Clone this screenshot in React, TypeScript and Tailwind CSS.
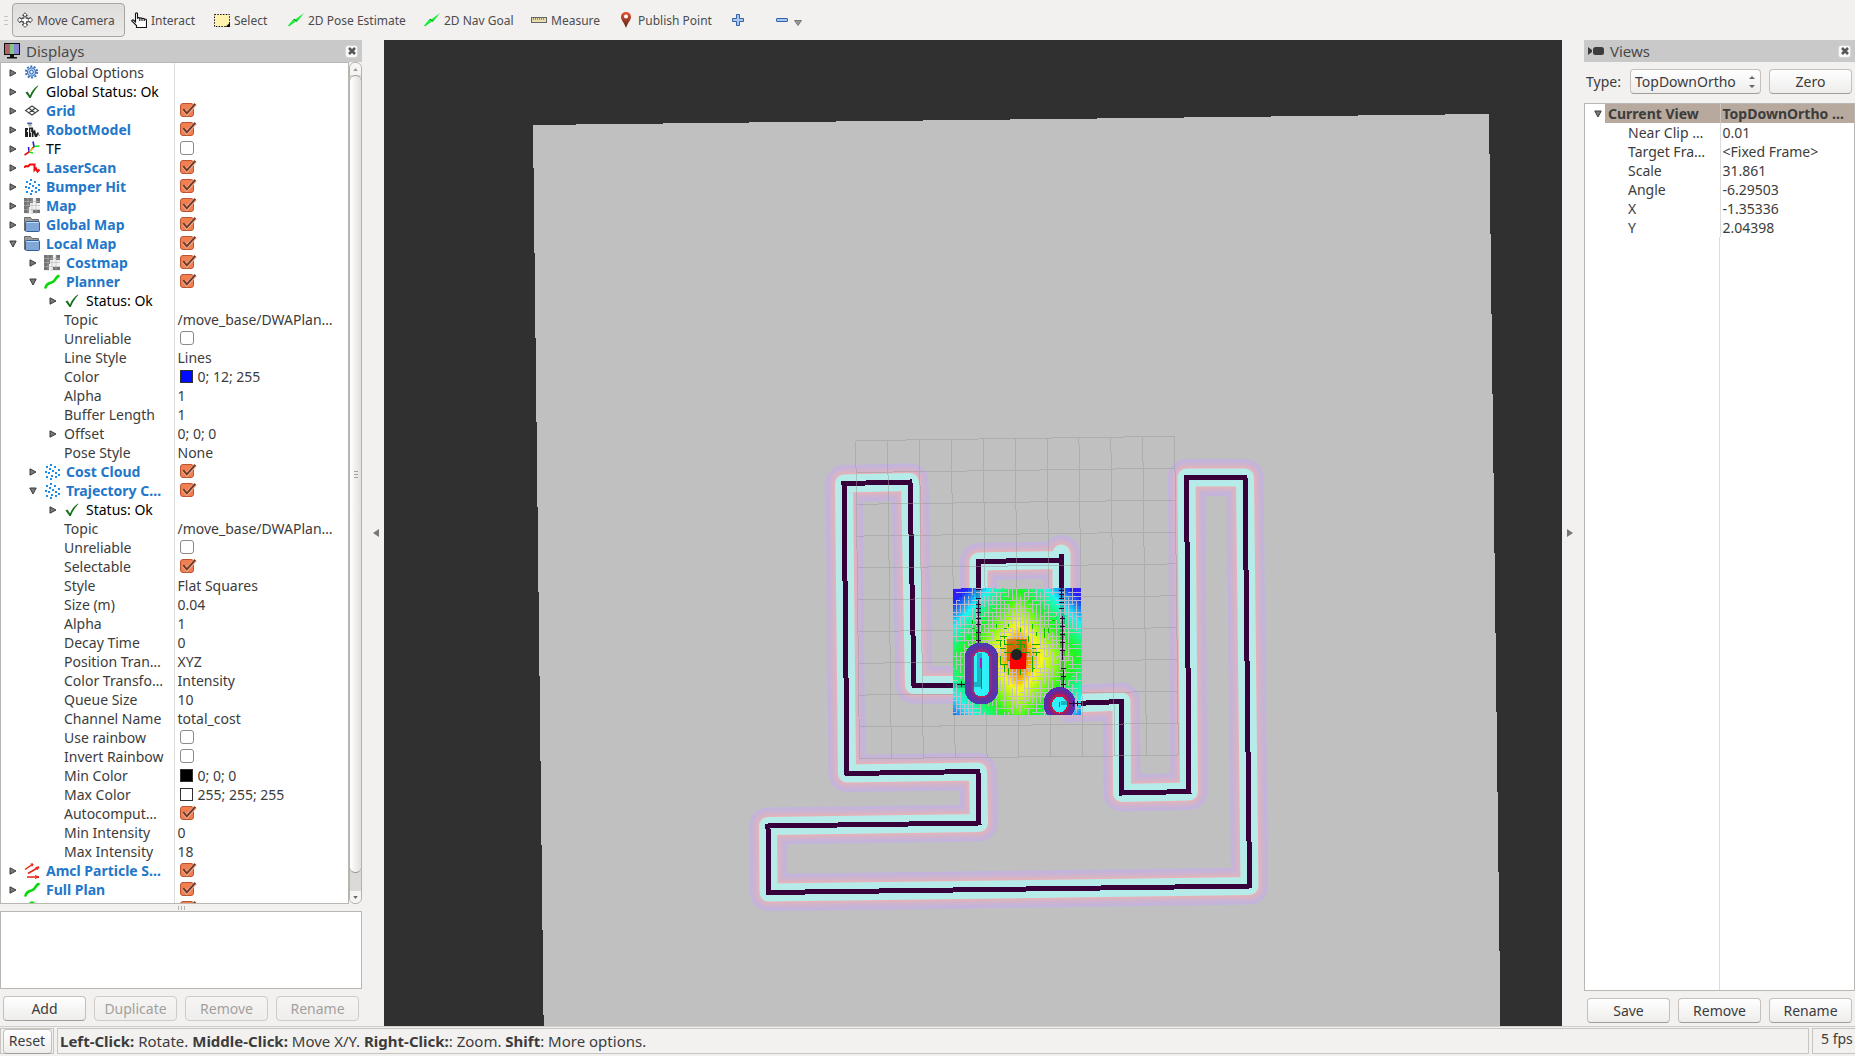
import React from "react";

type IconName =
  | "gear" | "check" | "grid" | "robot" | "tf" | "laser" | "points" | "map"
  | "folder" | "path" | "arrows" | "polygon";

type Row = {
  level: 0 | 1 | 2;
  name: string;
  icon?: IconName;
  arrow?: "open" | "closed";
  tone?: "on" | "black" | "plain";
  checked?: boolean;
  value?: string;
  swatch?: string;
};

const rows: Row[] = [
  { level: 0, name: "Global Options", icon: "gear", arrow: "closed" },
  { level: 0, name: "Global Status: Ok", icon: "check", arrow: "closed", tone: "black" },
  { level: 0, name: "Grid", icon: "grid", arrow: "closed", tone: "on", checked: true },
  { level: 0, name: "RobotModel", icon: "robot", arrow: "closed", tone: "on", checked: true },
  { level: 0, name: "TF", icon: "tf", arrow: "closed", tone: "black", checked: false },
  { level: 0, name: "LaserScan", icon: "laser", arrow: "closed", tone: "on", checked: true },
  { level: 0, name: "Bumper Hit", icon: "points", arrow: "closed", tone: "on", checked: true },
  { level: 0, name: "Map", icon: "map", arrow: "closed", tone: "on", checked: true },
  { level: 0, name: "Global Map", icon: "folder", arrow: "closed", tone: "on", checked: true },
  { level: 0, name: "Local Map", icon: "folder", arrow: "open", tone: "on", checked: true },
  { level: 1, name: "Costmap", icon: "map", arrow: "closed", tone: "on", checked: true },
  { level: 1, name: "Planner", icon: "path", arrow: "open", tone: "on", checked: true },
  { level: 2, name: "Status: Ok", icon: "check", arrow: "closed", tone: "black" },
  { level: 2, name: "Topic", value: "/move_base/DWAPlan…" },
  { level: 2, name: "Unreliable", checked: false },
  { level: 2, name: "Line Style", value: "Lines" },
  { level: 2, name: "Color", value: "0; 12; 255", swatch: "#000cff" },
  { level: 2, name: "Alpha", value: "1" },
  { level: 2, name: "Buffer Length", value: "1" },
  { level: 2, name: "Offset", arrow: "closed", value: "0; 0; 0" },
  { level: 2, name: "Pose Style", value: "None" },
  { level: 1, name: "Cost Cloud", icon: "points", arrow: "closed", tone: "on", checked: true },
  { level: 1, name: "Trajectory C…", icon: "points", arrow: "open", tone: "on", checked: true },
  { level: 2, name: "Status: Ok", icon: "check", arrow: "closed", tone: "black" },
  { level: 2, name: "Topic", value: "/move_base/DWAPlan…" },
  { level: 2, name: "Unreliable", checked: false },
  { level: 2, name: "Selectable", checked: true },
  { level: 2, name: "Style", value: "Flat Squares" },
  { level: 2, name: "Size (m)", value: "0.04" },
  { level: 2, name: "Alpha", value: "1" },
  { level: 2, name: "Decay Time", value: "0" },
  { level: 2, name: "Position Tran…", value: "XYZ" },
  { level: 2, name: "Color Transfo…", value: "Intensity" },
  { level: 2, name: "Queue Size", value: "10" },
  { level: 2, name: "Channel Name", value: "total_cost" },
  { level: 2, name: "Use rainbow", checked: false },
  { level: 2, name: "Invert Rainbow", checked: false },
  { level: 2, name: "Min Color", value: "0; 0; 0", swatch: "#000000" },
  { level: 2, name: "Max Color", value: "255; 255; 255", swatch: "#ffffff" },
  { level: 2, name: "Autocomput…", checked: true },
  { level: 2, name: "Min Intensity", value: "0" },
  { level: 2, name: "Max Intensity", value: "18" },
  { level: 0, name: "Amcl Particle S…", icon: "arrows", arrow: "closed", tone: "on", checked: true },
  { level: 0, name: "Full Plan", icon: "path", arrow: "closed", tone: "on", checked: true },
  { level: 0, name: "Marker", icon: "polygon", arrow: "closed", tone: "on", checked: true },
];

const views: [string, string][] = [
  ["Near Clip …", "0.01"],
  ["Target Fra…", "<Fixed Frame>"],
  ["Scale", "31.861"],
  ["Angle", "-6.29503"],
  ["X", "-1.35336"],
  ["Y", "2.04398"],
];

const dots: [number, number][] = [
  [6, 0], [10, 2], [2, 2], [5, 4], [14, 5], [8, 6], [1, 7], [4, 8],
  [11, 8], [7, 11], [2, 12], [11, 12], [14, 10], [6, 14],
];

function Icon({ name }: { name: IconName }) {
  return (
    <svg viewBox="0 0 16 16" className="block size-4 shrink-0" aria-hidden="true">
      {name === "gear" && (
        <g fill="none" stroke="#3c6eb4">
          <circle cx="7.500" cy="7" r="5.600" stroke="#3f74bb" strokeWidth="2" strokeDasharray="2 1.500" />
          <circle cx="7.500" cy="7" r="4.200" fill="#a9c7ec" />
          <circle cx="7.500" cy="7" r="1.800" fill="#e8f0fa" />
        </g>
      )}
      {name === "check" && (
        <path d="M1.500 8.500 3.500 7.500 6 11.500C7.500 7.500 10 4 14 1.500L14.300 2C11 5.500 8.500 9.500 6.800 14L5.500 14Z" fill="#15701b" />
      )}
      {name === "grid" && (
        <path d="M8 3 14.500 7.500 8 12 1.500 7.500ZM4.800 5.200 11.200 9.800M11.200 5.200 4.800 9.800" fill="none" stroke="#444" strokeWidth="1.100" />
      )}
      {name === "robot" && (
        <g fill="#222">
          <path d="M3.500.5h4l1 1.500H3Z" fill="#3c62a8" />
          <path d="M3.500 2h4v2.500H5Z" fill="#aaa" />
          <path d="M1 6h3v9H1ZM5 5.500h4l.5 3.500 1.500-1.500 1 4.500 2-2 .8 1-1.800 4h-2l-1.500-4v4H7.800v-5H7v5H5Z" />
          <path d="M3 8h1v2H3ZM6.200 7h1v4h-1Z" fill="#ddd" />
          <path d="M14 11l1.500 3" stroke="#777" />
        </g>
      )}
      {name === "tf" && (
        <g fill="none" strokeWidth="1.600">
          <path d="M10 5.500 15.500 5M5 11 9 12" stroke="#0ce612" />
          <path d="M10 5.500 9 .5M5 11 4.500 6" stroke="#2222e8" />
          <path d="M10 5.500 7 9M5 11 .5 14" stroke="#e81010" />
          <path d="M8.500 7 5.500 10.500" stroke="#e8c020" />
        </g>
      )}
      {name === "laser" && (
        <path d="M0 7.500 2 6 4 6.500 6 4.500 10.500 4.500 10.500 10 12 8.500 13.500 11.500 15.500 9.500" fill="none" stroke="#f30808" strokeWidth="2" />
      )}
      {name === "points" && dots.map(([x, y]) => (
        <rect key={`${x}-${y}`} x={x} y={y} width="2" height="2" fill="#1c8eea" />
      ))}
      {name === "map" && (
        <g>
          <rect width="16" height="16" fill="#f2f2f2" />
          <path d="M0 0H9V5H6V9H5V15H0ZM12 0H16V5H12ZM9 12H16V15H9Z" fill="#737373" />
          <path d="M0 3.500H16M0 7.500H16M0 11.500H16M4 0V16M8 0V16M12 0V16" stroke="#b5b5b5" strokeWidth=".6" />
        </g>
      )}
      {name === "folder" && (
        <g strokeWidth="1">
          <path d="M.5 13.500V.5H6.500L8 2.500H14.500V13.500Z" fill="#9b9b97" stroke="#6d6d69" />
          <rect x="1.500" y="4.500" width="14" height="10" rx="1" fill="#7fa7d8" stroke="#32609e" />
          <path d="M2.500 5.500H14.500" stroke="#c7dcf3" />
        </g>
      )}
      {name === "path" && (
        <path d="M1.500 13.500C3 8 7 9.500 9.500 7.500S11.500 3.500 14.500 2" fill="none" stroke="#0bd80b" strokeWidth="2.600" strokeLinecap="round" />
      )}
      {name === "arrows" && (
        <g fill="none" stroke="#e82010" strokeWidth="1.500">
          <path d="M1 6.500 9 1M4 10.500 15 4M3 14H15" />
          <path d="M6.500 1 9 1 8 3.500M11.500 4.500 15 4 13 7M11 12.500 15 14 11 15.500" strokeWidth="1" />
        </g>
      )}
      {name === "polygon" && <path d="M8 0 15 4 13 13H3L1 4Z" fill="#08e808" />}
    </svg>
  );
}

function Arrow({ open }: { open: boolean }) {
  return (
    <svg viewBox="0 0 8 8" className="block size-2 shrink-0" aria-hidden="true">
      <path d={open ? "M.8 1H7.200L4 7Z" : "M1 .8V7.200L7 4Z"} fill="#7a7a7a" stroke="#3c3c3c" />
    </svg>
  );
}

function CheckBox({ id, checked }: { id: string; checked: boolean }) {
  return (
    <span className="mb-px ml-[5px] grid w-[17px]">
      <input
        id={id}
        type="checkbox"
        defaultChecked={checked}
        className="peer col-start-1 row-start-1 size-[14px] appearance-none rounded-[3px] border border-[#8d8b87] bg-white checked:border-[#bb5430] checked:bg-[#f07f52]"
      />
      <svg viewBox="0 0 17 14" className="pointer-events-none invisible col-start-1 row-start-1 h-[14px] w-[17px] peer-checked:visible" aria-hidden="true">
        <path d="M3.500 6.500 6.800 10.500 15.500 1" fill="none" stroke="#f9b394" strokeWidth="3.500" />
        <path d="M3.300 6.200 6.800 10.300 15.300 .8" fill="none" stroke="#6b3a2a" strokeWidth="2" />
      </svg>
    </span>
  );
}

const arrowPad = { 0: "pl-2", 1: "pl-7", 2: "pl-12" };
const toneClass = { on: "font-bold text-[#2277c9]", black: "text-black", plain: "text-[#3c3c3c]" };

function TreeRow({ row, index }: { row: Row; index: number }) {
  const id = `display-${index}`;
  const cls = `whitespace-nowrap ${toneClass[row.tone ?? "plain"]}`;
  return (
    <tr className="h-[19px]">
      <td className="overflow-hidden border-r border-[#dcdcdc] p-0">
        <div className={`flex h-[19px] items-center ${arrowPad[row.level]}`}>
          <span className="w-2 shrink-0">{row.arrow && <Arrow open={row.arrow === "open"} />}</span>
          {row.icon ? (
            <span className="mr-[6px] ml-[7px] shrink-0"><Icon name={row.icon} /></span>
          ) : (
            <span className="w-[7px] shrink-0" />
          )}
          {row.checked === undefined ? <span className={cls}>{row.name}</span> : <label htmlFor={id} className={cls}>{row.name}</label>}
        </div>
      </td>
      <td className="overflow-hidden p-0">
        <div className="flex h-[19px] items-center whitespace-nowrap text-[#3c3c3c]">
          {row.checked !== undefined && <CheckBox id={id} checked={row.checked} />}
          {row.swatch && <span className="mr-[5px] ml-[5px] size-[13px] border border-[#303030]" style={{ backgroundColor: row.swatch }} />}
          {row.value && <span className={row.swatch ? "" : "pl-[3px]"}>{row.value}</span>}
        </div>
      </td>
    </tr>
  );
}

function PushButton({ children, disabled, className = "w-[83px]" }: { children: string; disabled?: boolean; className?: string }) {
  return (
    <button
      type="button"
      disabled={disabled}
      className={`h-[25px] shrink-0 rounded-[4px] border border-[#c4c0bb] border-b-[#a19e99] bg-linear-to-b from-white to-[#eeedec] text-center leading-[22px] text-[#3c3c3c] disabled:border-[#cfccc8] disabled:from-[#f6f5f4] disabled:to-[#efeeed] disabled:text-[#a3a09c] ${className}`}
    >
      {children}
    </button>
  );
}

function PanelTitle({ title, children }: { title: string; children: React.ReactNode }) {
  return (
    <header className="flex h-[22px] shrink-0 items-center gap-[6px] bg-[#c9c9c9] pr-1 pl-1 text-[#4a4a4a]">
      {children}
      <h2 className="flex-1 text-[15px]">{title}</h2>
      <button type="button" aria-label={`Close ${title}`} className="grid size-[13px] place-items-center rounded-[3px] border border-[#d8d6d3] bg-[#f9f9f8]">
        <svg viewBox="0 0 8 8" className="size-2"><path d="M1 1 7 7M7 1 1 7" stroke="#555" strokeWidth="2.600" /></svg>
      </button>
    </header>
  );
}

function ToolIcon({ name }: { name: string }) {
  return (
    <svg viewBox="0 0 16 16" className="block size-4 shrink-0" aria-hidden="true">
      {name === "move" && (
        <g fill="#fff" stroke="#555" strokeWidth="1">
          <path d="M8 .7 10.500 3.500H9V6.500H13V5L15.500 8 13 11V9.500H9.500V12.500H11L8 15.300 5 12.500H6.500V9.500H3V11L.5 8 3 5V6.500H7V3.500H5.500Z" />
          <circle cx="8" cy="8" r="3.500" fill="none" strokeWidth=".8" />
        </g>
      )}
      {name === "hand" && (
        <path d="M4.500 10V1.500Q5.500.3 6.500 1.500V6Q7.500 5 8.700 6.200 10 5.400 11 6.600 12.500 5.800 13.200 7 15 6.800 15.500 8V15.500H5.500V13.500L.7 8.800Q1.500 7.200 3 8.500ZM8.800 6.500V9M11 7V9M13.200 7.500V9" fill="#fff" stroke="#111" strokeWidth="1.100" />
      )}
      {name === "select" && (
        <g>
          <rect x=".5" y="2.500" width="15" height="12" fill="#fdf3ae" stroke="#111" strokeDasharray="1.500 1.300" />
          <path d="M12 14.500 16 10.500V15H12Z" fill="#111" />
        </g>
      )}
      {name === "arrow" && (
        <g>
          <path d="M0 13.500 6 6.500 6.500 8 16 1 9.500 9.500 8.500 9 1 14.500Z" fill="#18ee3a" />
          <path d="M6 7 9 9.500" stroke="#0a7a20" />
        </g>
      )}
      {name === "ruler" && (
        <g>
          <rect x=".5" y="5.500" width="15" height="5" fill="#e9dfae" stroke="#666" />
          <path d="M2.500 6V8M4.500 6V8M6.500 6V8M8.500 6V8M10.500 6V8M12.500 6V8" stroke="#777" strokeWidth=".8" />
        </g>
      )}
      {name === "pin" && (
        <g>
          <defs><linearGradient id="pin" x2="0" y2="1"><stop stopColor="#ea5638" /><stop offset="1" stopColor="#4e2415" /></linearGradient></defs>
          <path d="M8 0C4.500 0 3 2.500 3 5 3 8.500 6 10 8 16 10 10 13 8.500 13 5 13 2.500 11.500 0 8 0Z" fill="url(#pin)" />
          <circle cx="8" cy="4.500" r="2" fill="#fff" />
        </g>
      )}
      {name === "plus" && <path d="M6.500 2.500H9.500V6.500H13.500V9.500H9.500V13.500H6.500V9.500H2.500V6.500H6.500Z" fill="#a8c8ee" stroke="#3163a5" />}
      {name === "minus" && <rect x="2.500" y="6.500" width="11" height="3" rx=".5" fill="#a8c8ee" stroke="#3163a5" />}
    </svg>
  );
}

const tools: [string, string, string][] = [
  ["hand", "Interact", "w-[83px]"],
  ["select", "Select", "w-[74px]"],
  ["arrow", "2D Pose Estimate", "w-[136px]"],
  ["arrow", "2D Nav Goal", "w-[107px]"],
  ["ruler", "Measure", "w-[87px]"],
  ["pin", "Publish Point", "w-[112px]"],
];

/* Laser-mapped walls of the world, in scene pixels. */
const wallPaths = [
  "M970 685H914L910 482 844 483.500 847 773.500 978 771.500 979 823 768 826 768.500 892.500 1249.500 886 1245 477.500H1186.500L1189 791.500 1122 793 1121.500 701.500 1062 704",
  "M978.500 640V561.500L1061.500 560V553.500 700",
];

const inflation: [string, number][] = [
  ["#c2b4dc", 37], ["#c5b4d9", 34], ["#c9b4d4", 31], ["#ceb4ce", 28],
  ["#d5b4c7", 25], ["#ddb4c0", 22], ["#e7b2b8", 20],
];

function random(seed: number) {
  let s = seed;
  return () => {
    s = (s * 1664525 + 1013904223) % 4294967296;
    return s / 4294967296;
  };
}

const BOX = { x: 953, y: 588, w: 128, h: 127 };

function costCells() {
  const cells: { x: number; y: number; fill: string }[] = [];
  for (let y = BOX.y; y < BOX.y + BOX.h; y += 3) {
    for (let x = BOX.x; x < BOX.x + BOX.w; x += 3) {
      const dx = Math.min(1, Math.abs(x + 1 - 1018) / 65);
      const dy = Math.min(1, Math.abs(y + 1 - 657) / 68);
      const hx = 122 * Math.pow(dx, 0.9);
      const hy = 110 * Math.pow(dy, 1.15);
      const corner = (y < 655 ? 66 : 34) * Math.pow(dx * dy, 1.3);
      const hue = 12 + Math.pow(Math.pow(hx, 1.35) + Math.pow(hy, 1.35), 1 / 1.35) + corner;
      cells.push({ x, y, fill: `hsl(${Math.min(245, Math.round(hue))} 92% ${hue < 50 ? 50 : 54}%)` });
    }
  }
  return cells;
}

function scratches(count: number, seed: number, halfW: number, halfH: number, maxLen: number, cx: number, cy: number) {
  const next = random(seed);
  let d = "";
  for (let i = 0; i < count; i++) {
    const x = Math.round((cx + (next() * 2 - 1) * halfW) / 4) * 4;
    const y = Math.round((cy + (next() * 2 - 1) * halfH) / 4) * 4;
    const len = Math.round(3 + next() * maxLen);
    d += next() > 0.5
      ? `M${x} ${y + 0.5}h${Math.max(2, Math.min(len, 1081 - x))}`
      : `M${x + 0.5} ${y}v${Math.max(2, Math.min(len, 715 - y))}`;
  }
  return d;
}

function gridLines() {
  let d = "";
  for (let i = 0; i <= 10; i++) {
    const t = i / 10;
    d += `M${855.7 + 318.9 * t} ${440.7 - 4.4 * t}L${859.5 + 318.9 * t} ${758.7 - 3.4 * t}`;
    d += `M${855.7 + 3.8 * t} ${440.7 + 318 * t}L${1174.6 + 3.8 * t} ${436.3 + 319 * t}`;
  }
  return d;
}

function Scene() {
  return (
    <svg viewBox="384 40 1178 986" preserveAspectRatio="xMidYMid slice" className="block size-full bg-[#303030]" role="img" aria-label="Top-down map view">
      <defs>
        <clipPath id="local"><rect x={BOX.x} y={BOX.y} width={BOX.w} height={BOX.h} /></clipPath>
      </defs>
      <path d="M533 125 1489 114 1500.500 1030H543.700Z" fill="#c0c0c0" shapeRendering="crispEdges" />
      {inflation.map(([color, width]) => (
        <g key={width} fill="none" stroke={color} strokeWidth={width} strokeLinejoin="round">
          {wallPaths.map((d) => <path key={d} d={d} />)}
        </g>
      ))}
      <g fill="none" strokeLinejoin="round">
        {wallPaths.map((d) => <path key={d} d={d} stroke="#b5ecea" strokeWidth="18" />)}
      </g>
      <g fill="none" stroke="#38003a" strokeWidth="5" shapeRendering="crispEdges">
        {wallPaths.map((d) => <path key={d} d={d} />)}
      </g>
      <path d={gridLines()} fill="none" stroke="#999" strokeOpacity=".5" strokeWidth="1" shapeRendering="crispEdges" />
      <g clipPath="url(#local)" shapeRendering="crispEdges">
        {costCells().map((c) => <rect key={`${c.x}-${c.y}`} x={c.x} y={c.y} width="3" height="3" fill={c.fill} />)}
        <path d="M978.500 588V650M1062.500 588V700M954 685H970" stroke="#0c3a4a" strokeOpacity=".28" strokeWidth="5" fill="none" />
        <path d={scratches(800, 7, 64, 64, 15, 1013, 648)} stroke="#c9bccb" strokeOpacity=".9" fill="none" />
        <rect x="1007" y="639" width="20" height="22" fill="#c85a00" fillOpacity=".75" />
        <path d={scratches(46, 31, 21, 18, 7, 1014, 650)} stroke="#12a808" fill="none" />
        <path d={scratches(16, 97, 45, 26, 3, 1016, 645)} stroke="#12b808" fill="none" />
        <path d="M978.500 600V645M1061.500 588V598M1062.500 616V660M1063.500 670V690" stroke="#2e0430" fill="none" />
        <path d="M976 589.500h5M976 598.500h5M976 604.500h5M976 608.500h5M976 612.500h5M976 618.500h5M976 624.500h5M976 632.500h5M976 640.500h5M1059 590.500h5M1059 594.500h5M1059 598.500h5M1059 602.500h5M1059 608.500h5M1060 618.500h5M1060 626.500h5M1060 634.500h5M1060 642.500h5M1060 650.500h5M1061 668.500h5M1061 676.500h5M1061 684.500h5M957 684.500h15M961.500 681v6M966.500 681v6" stroke="#2e0430" fill="none" />
        <rect x="965" y="643" width="33" height="61" rx="14" fill="#5038ae" />
        <rect x="968" y="646" width="27" height="55" rx="12" fill="#66309e" />
        <rect x="971" y="649" width="21" height="49" rx="10" fill="#8e2c80" />
        <rect x="973" y="651" width="17" height="46" rx="8" fill="#c42a58" />
        <rect x="974" y="652" width="15" height="44" rx="6" fill="#2ef2f8" />
        <path d="M977 653H982V687H974V682H977Z" fill="#18b4c4" />
        <path d="M981.500 658V689" stroke="#b414c8" strokeWidth="1" />
        <path d="M980.500 658V668" stroke="#b414c8" strokeWidth="1" />
        <ellipse cx="1059.500" cy="704" rx="16" ry="17" fill="#5a2cae" />
        <ellipse cx="1059.500" cy="704" rx="12.500" ry="13" fill="#7c2286" />
        <ellipse cx="1059.500" cy="704" rx="9.500" ry="10.500" fill="#bc1c50" />
        <ellipse cx="1059.500" cy="704.500" rx="7.500" ry="8" fill="#2ef2f8" />
        <path d="M1061 701h6v4h-6Z" fill="#18b4c4" />
        <path d="M1059.500 702v5" stroke="#b414c8" />
        <path d="M1069 703.500h12M1073.500 701v5M1077.500 701v5" stroke="#2e0430" />
        <rect x="1010" y="653" width="16" height="16" fill="#f00" />
      </g>
      <circle cx="1016.500" cy="654.500" r="5.500" fill="#222" />
    </svg>
  );
}

function Gutter({ side }: { side: "left" | "right" }) {
  return (
    <div className={`flex w-[22px] shrink-0 items-center px-[5px] ${side === "left" ? "justify-end" : "justify-start"}`}>
      <svg viewBox="0 0 6 8" className="h-2 w-[6px]" aria-hidden="true">
        <path d={side === "left" ? "M6 0V8L0 4Z" : "M0 0V8L6 4Z"} fill="#777" />
      </svg>
    </div>
  );
}

export default function App() {
  return (
    <div className="flex h-screen flex-col overflow-hidden bg-[#f2f1f0] font-['Noto_Sans',sans-serif] text-[14px] leading-[19px] text-[#3c3c3c]">
      <nav className="flex h-10 shrink-0 items-center text-[12px] text-[#4c4c4c]" aria-label="Tools">
        <div className="flex w-3 shrink-0 flex-col items-start gap-[3px] pl-1">
          <i className="h-px w-1 bg-[#c9c6c2]" /><i className="h-px w-1 bg-[#c9c6c2]" /><i className="h-px w-1 bg-[#c9c6c2]" />
        </div>
        <button type="button" aria-pressed="true" className="mr-[6px] flex h-[34px] w-[113px] items-center gap-1 rounded-[4px] border border-[#a8a49e] bg-linear-to-b from-[#dedddb] to-[#eceae8] pl-1 whitespace-nowrap">
          <ToolIcon name="move" />Move Camera
        </button>
        {tools.map(([icon, label, width]) => (
          <button key={label} type="button" className={`flex h-[34px] shrink-0 items-center gap-1 whitespace-nowrap ${width}`}>
            <ToolIcon name={icon} />{label}
          </button>
        ))}
        <button type="button" aria-label="Add tool" className="w-11"><ToolIcon name="plus" /></button>
        <button type="button" aria-label="Remove tool" className="flex items-center gap-1">
          <ToolIcon name="minus" />
          <svg viewBox="0 0 8 6" className="mt-[6px] h-[6px] w-2"><path d="M.5.5H7.500L4 5.500Z" fill="#999" stroke="#777" /></svg>
        </button>
      </nav>

      <div className="flex min-h-0 flex-1">
        <aside className="flex w-[362px] shrink-0 flex-col">
          <PanelTitle title="Displays">
            <svg viewBox="0 0 16 16" className="size-4" aria-hidden="true">
              <rect x="0" y="0" width="16" height="12" fill="#111" />
              <rect x="1" y="1" width="5" height="10" fill="#b06468" /><rect x="6" y="1" width="4" height="10" fill="#7fc886" /><rect x="10" y="1" width="5" height="10" fill="#8a86d4" />
              <path d="M6 12H10V14H13V15.500H3V14H6Z" fill="#111" />
            </svg>
          </PanelTitle>
          <div className="flex min-h-0 flex-1">
            <div className="min-w-0 flex-1 overflow-hidden border border-[#bab6b1] bg-white">
              <table className="w-full table-fixed border-collapse">
                <colgroup><col className="w-[173px]" /><col /></colgroup>
                <tbody>{rows.map((row, i) => <TreeRow key={i} row={row} index={i} />)}</tbody>
              </table>
            </div>
            <div className="flex w-[13px] flex-col rounded-[6px] border border-[#b5b2ad] bg-[#dcdad7]" aria-hidden="true">
              <div className="grid h-3 place-items-center rounded-t-[5px] bg-[#f6f5f4]"><svg viewBox="0 0 6 4" className="h-[3px] w-[5px]"><path d="M0 4 3 0 6 4Z" fill="#999" /></svg></div>
              <div className="grid flex-1 place-items-center rounded-[6px] border-y border-[#99958f] bg-linear-to-r from-white to-[#e2e0dd]">
                <div className="flex flex-col gap-[2px]"><i className="h-px w-1 bg-[#a5a29d]" /><i className="h-px w-1 bg-[#a5a29d]" /><i className="h-px w-1 bg-[#a5a29d]" /></div>
              </div>
              <div className="h-[18px]" />
              <div className="grid h-3 place-items-center rounded-b-[5px] bg-[#f6f5f4]"><svg viewBox="0 0 6 4" className="h-[3px] w-[5px]"><path d="M0 0 3 4 6 0Z" fill="#666" /></svg></div>
            </div>
          </div>
          <div className="flex h-[7px] shrink-0 items-center justify-center gap-[2px]">
            <i className="h-1 w-px bg-[#b5b2ad]" /><i className="h-1 w-px bg-[#b5b2ad]" /><i className="h-1 w-px bg-[#b5b2ad]" />
          </div>
          <div className="h-[78px] shrink-0 border border-[#bab6b1] bg-white" />
          <div className="flex h-[37px] shrink-0 justify-between px-[3px] pt-[7px]">
            <PushButton>Add</PushButton>
            <PushButton disabled>Duplicate</PushButton>
            <PushButton disabled>Remove</PushButton>
            <PushButton disabled>Rename</PushButton>
          </div>
        </aside>

        <Gutter side="left" />
        <main className="min-w-0 flex-1"><Scene /></main>
        <Gutter side="right" />

        <aside className="flex w-[271px] shrink-0 flex-col">
          <PanelTitle title="Views">
            <svg viewBox="0 0 16 8" className="h-2 w-4" aria-hidden="true">
              <path d="M0 0 4 3V5L0 8Z" fill="#3c3c3c" /><rect x="5" y="0" width="11" height="8" rx="2.500" fill="#3c3c3c" />
            </svg>
          </PanelTitle>
          <div className="flex h-[41px] shrink-0 items-center justify-between pr-[3px] pb-[2px] pl-[2px]">
            <label htmlFor="view-type">Type:</label>
            <div className="flex gap-2">
              <div className="grid w-[131px]">
                <select id="view-type" className="col-start-1 row-start-1 h-[25px] w-full appearance-none rounded-[4px] border border-[#c4c0bb] border-b-[#a19e99] bg-linear-to-b from-white to-[#eeedec] pl-1">
                  <option>TopDownOrtho</option>
                </select>
                <svg viewBox="0 0 6 12" className="pointer-events-none col-start-1 row-start-1 mr-[6px] h-3 w-[6px] place-self-end self-center" aria-hidden="true">
                  <path d="M0 3 3 0 6 3ZM0 9 3 12 6 9Z" fill="#666" />
                </svg>
              </div>
              <PushButton>Zero</PushButton>
            </div>
          </div>
          <div className="flex min-h-0 flex-1 flex-col border border-[#bab6b1] bg-white">
            <table className="w-full table-fixed border-collapse whitespace-nowrap">
              <colgroup><col className="w-[20px]" /><col className="w-[115px]" /><col /></colgroup>
              <tbody>
                <tr className="h-[19px] font-bold">
                  <td className="p-0 pl-[9px]"><Arrow open /></td>
                  <td className="border-r border-[#cfc6c0] bg-[#b8a99e] p-0 pl-[3px]">Current View</td>
                  <td className="bg-[#b8a99e] p-0 pl-[2px]">TopDownOrtho …</td>
                </tr>
                {views.map(([name, value]) => (
                  <tr key={name} className="h-[19px]">
                    <td className="p-0" />
                    <td className="border-r border-[#dcdcdc] p-0 pl-[23px]">{name}</td>
                    <td className="p-0 pl-[2px]">{value}</td>
                  </tr>
                ))}
              </tbody>
            </table>
            <div className="w-[135px] flex-1 border-r border-[#dcdcdc]" />
          </div>
          <div className="flex h-[35px] shrink-0 justify-between px-[3px] pt-[7px]">
            <PushButton>Save</PushButton>
            <PushButton>Remove</PushButton>
            <PushButton>Rename</PushButton>
          </div>
        </aside>
      </div>

      <footer className="flex h-[30px] shrink-0 gap-[3px] border-t border-[#d0cdc9] pt-px pb-[2px]">
        <div className="flex w-[54px] items-center justify-center border border-[#c8c5c1]">
          <PushButton className="w-[49px]">Reset</PushButton>
        </div>
        <p className="flex-1 border border-[#c8c5c1] pl-[2px] text-[15px] leading-[25px]">
          <b>Left-Click:</b> Rotate. <b>Middle-Click:</b> Move X/Y. <b>Right-Click:</b>: Zoom. <b>Shift</b>: More options.
        </p>
        <p className="w-[43px] border border-r-0 border-[#c8c5c1] pl-2 whitespace-nowrap">5 fps</p>
      </footer>
    </div>
  );
}
